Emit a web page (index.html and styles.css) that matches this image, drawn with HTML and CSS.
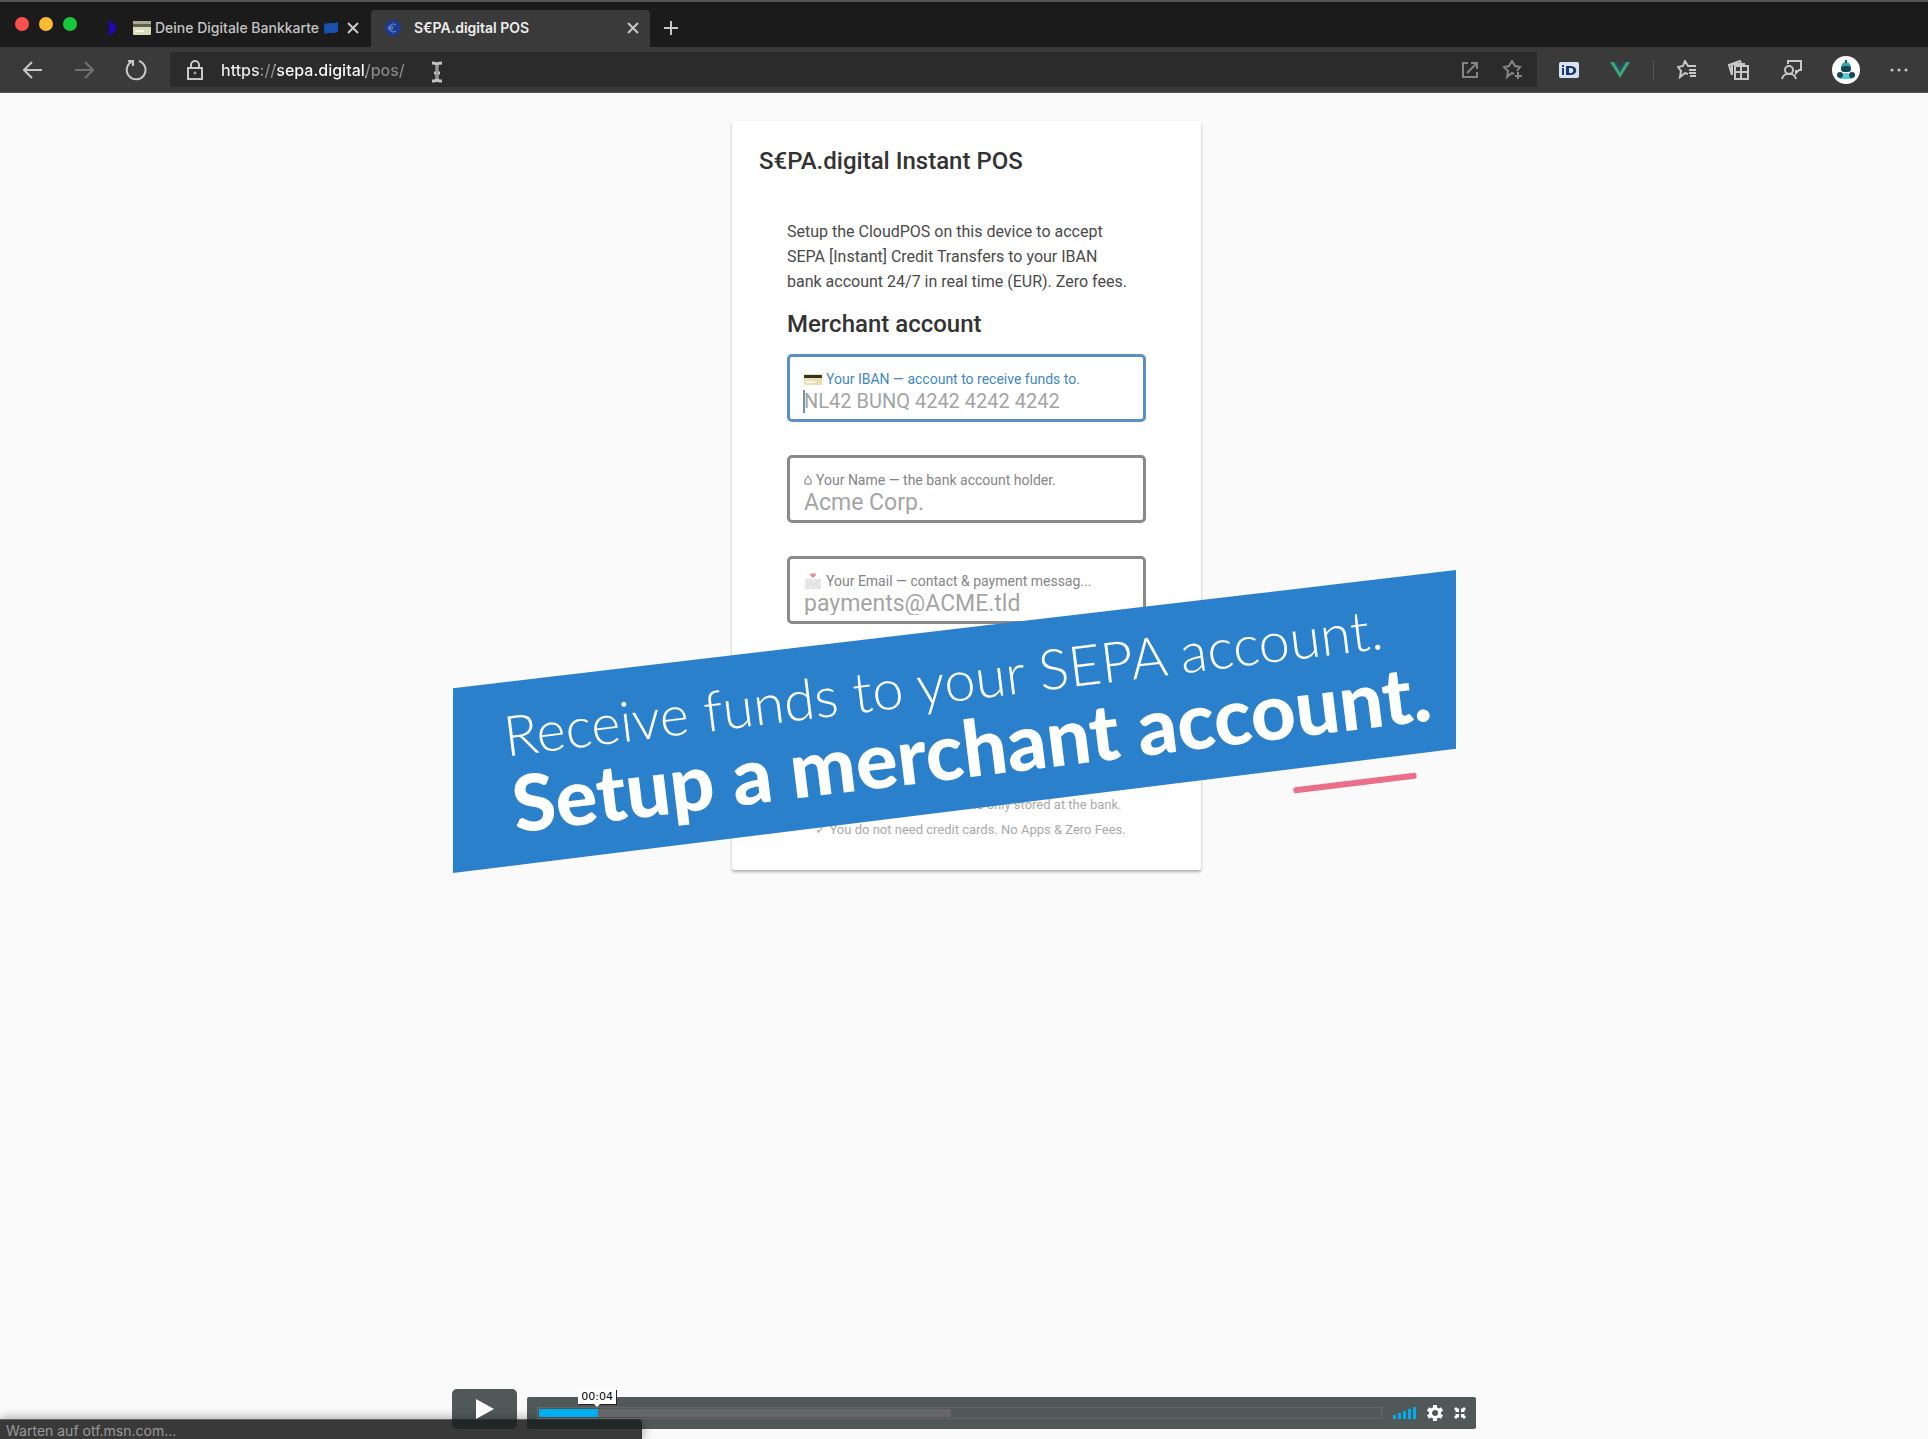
FILE: index.html
```html
<!DOCTYPE html>
<html lang="en">
<head>
    <meta charset="UTF-8">
    <meta name="viewport" content="width=device-width, initial-scale=1.0">
    <title>S€PA.digital POS</title>
    <link rel="stylesheet" href="styles.css">
</head>
<body>

    <header class="browser">
        <div class="tabs">
            <div class="lights">
                <span class="light red"></span>
                <span class="light yellow"></span>
                <span class="light green"></span>
            </div>
            <div class="tab">
                <svg class="moon" width="14" height="16" viewBox="0 0 14 16"><path d="M3 1c5 0 9 3 9 7s-4 7-9 7c3-3 3-11 0-14z" fill="#2306b5"/></svg>
                <svg width="18" height="14" viewBox="0 0 18 14"><rect width="18" height="14" rx="1" fill="#d9dcb8"/><rect width="18" height="3" fill="#a9ab8c"/><rect y="3" width="18" height="3" fill="#5f6150"/><rect x="2" y="9" width="9" height="2" fill="#f7f8e6"/></svg>
                <span class="tab-title">Deine Digitale Bankkarte</span>
                <svg width="16" height="14" viewBox="0 0 16 14"><path d="M1 3c5-2 9 0 14-2v10c-5 2-9 0-14 2z" fill="#174fae"/><circle cx="8" cy="7" r="3" fill="none" stroke="#3c78b8" stroke-width="1" stroke-dasharray="1 2"/></svg>
                <button class="close" type="button" aria-label="Close tab"><svg width="12" height="12" viewBox="0 0 12 12"><path d="M1 1l10 10M11 1L1 11"/></svg></button>
            </div>
            <div class="tab active">
                <svg class="favicon" width="18" height="18" viewBox="0 0 18 18"><circle cx="9" cy="9" r="8" fill="#1b3c92"/><path d="M12 6a4 4 0 1 0 0 6M4 8h6M4 10h5" fill="none" stroke="#6f98cc" stroke-width="1"/></svg>
                <span class="tab-title">S€PA.digital POS</span>
                <button class="close" type="button" aria-label="Close tab"><svg width="12" height="12" viewBox="0 0 12 12"><path d="M1 1l10 10M11 1L1 11"/></svg></button>
            </div>
            <button class="new-tab" type="button" aria-label="New tab"><svg width="16" height="16" viewBox="0 0 16 16"><path d="M8 1v14M1 8h14"/></svg></button>
        </div>

        <div class="toolbar">
            <nav class="nav">
                <button type="button" aria-label="Back"><svg width="20" height="20" viewBox="0 0 20 20"><path d="M19 10H1M9 2l-8 8 8 8"/></svg></button>
                <button type="button" class="dim" aria-label="Forward"><svg width="20" height="20" viewBox="0 0 20 20"><path d="M1 10h18M11 2l8 8-8 8"/></svg></button>
                <button type="button" aria-label="Reload"><svg width="22" height="22" viewBox="0 0 22 22"><path d="M14 2a9.400 9.400 0 1 1-7 0.500M3 2h5v5"/></svg></button>
            </nav>
            <form class="address">
                <svg width="16" height="20" viewBox="0 0 16 20"><path d="M1 8h14v11H1zM4 8V5a4 4 0 0 1 8 0v3"/><circle cx="8" cy="13" r="1" stroke-width="1"/></svg>
                <input class="url" type="text" value="https://sepa.digital/pos/" aria-label="Address">
                <button type="button" aria-label="Open in app"><svg width="18" height="18" viewBox="0 0 18 18"><path d="M7 2H2v14h14v-5M6 12L15 3M10 2h6v6"/></svg></button>
                <button type="button" aria-label="Add to favorites"><svg width="20" height="20" viewBox="0 0 20 20"><path d="M11 14l-2-1-5 4 1-6-4-4 5-1 3-5 3 5 5 1-3 4M15 12v7M12 16h7"/></svg></button>
            </form>
            <div class="tools">
                <button type="button" aria-label="iD"><svg class="solid" width="20" height="16" viewBox="0 0 20 16"><rect width="20" height="16" rx="2" fill="#d8e2f0"/><path d="M3 6h2v7H3zM3 3h2v2H3z" fill="#19376f"/><path d="M7 4h5c7 0 7 9 0 9H7zM10 6v5h2c3 0 3-5 0-5z" fill="#19376f" fill-rule="evenodd"/></svg></button>
                <button type="button" aria-label="Vue devtools"><svg class="solid" width="20" height="18" viewBox="0 0 20 18"><path d="M0 1h4l6 10 6-10h4L10 17z" fill="#3aa57c"/><path d="M4 1h3l3 5 3-5h3l-6 10z" fill="#31495b"/></svg></button>
                <span class="divider"></span>
                <button type="button" aria-label="Favorites"><svg width="20" height="20" viewBox="0 0 20 20"><path d="M11 14l-3-1-5 4 1-6-3-4 5-1 2-5 3 5h8M12 10h7M12 13h7M13 16h6"/></svg></button>
                <button type="button" aria-label="Collections"><svg width="22" height="20" viewBox="0 0 22 20"><path d="M7 6h13v13H7zM13 7v11M8 12h11M4 15L1 5l11-4 2 5M4 15V4h12v2"/></svg></button>
                <button type="button" aria-label="Feedback"><svg width="22" height="20" viewBox="0 0 22 20"><circle cx="8" cy="10" r="4"/><path d="M1 19c1-7 13-7 14 0M7 4V1h13v9h-2l-3 3v-3"/></svg></button>
                <button type="button" class="avatar" aria-label="Profile"><svg class="solid" width="28" height="28" viewBox="0 0 28 28"><circle cx="14" cy="14" r="14" fill="#fff"/><path d="M9 12c0-8 10-8 10 0z" fill="#37a5b3"/><path d="M13 4h2v3h-2z" fill="#175a67"/><rect x="9" y="10" width="10" height="6" rx="3" fill="#164653"/><path d="M8 23c0-8 12-8 12 0z" fill="#58c7d6"/><circle cx="8" cy="19" r="3" fill="#1b4652"/><circle cx="20" cy="19" r="3" fill="#1b4652"/></svg></button>
                <button type="button" aria-label="Menu"><svg class="dots" width="20" height="4" viewBox="0 0 20 4"><circle cx="3" cy="2" r="1.500"/><circle cx="10" cy="2" r="1.500"/><circle cx="17" cy="2" r="1.500"/></svg></button>
            </div>
        </div>
        <svg class="pointer" width="14" height="24" viewBox="0 0 14 24"><path d="M2 3c3 0 5 0 5 3 0-3 2-3 5-3M2 21c3 0 5 0 5-3 0 3 2 3 5 3M7 6v12M4 13h6" fill="none" stroke="#c4c4c4" stroke-width="3"/><path d="M7 5v14" stroke="#666" stroke-width="1"/></svg>
    </header>

    <main class="page">
        <form class="card">
            <h1>S€PA.digital Instant POS</h1>
            <div class="content">
                <p class="intro">Setup the CloudPOS on this device to accept SEPA [Instant] Credit Transfers to your IBAN bank account 24/7 in real time (EUR). Zero fees.</p>
                <h2>Merchant account</h2>
                <div class="fields">
                    <div class="field focused">
                        <label for="iban"><svg width="18" height="11" viewBox="0 0 18 11"><rect width="18" height="11" rx="1" fill="#e8dfb4"/><rect y="1" width="18" height="3" fill="#37331f"/><rect x="2" y="7" width="9" height="2" fill="#faf6dd"/></svg> Your IBAN — account to receive funds to.</label>
                        <input type="text" id="iban" placeholder="NL42 BUNQ 4242 4242 4242">
                        <span class="caret"></span>
                    </div>
                    <div class="field">
                        <label for="name"><svg width="8" height="10" viewBox="0 0 8 10"><path d="M1 9V5l3-4 3 4v4z" fill="none" stroke="#777"/></svg> Your Name — the bank account holder.</label>
                        <input type="text" id="name" placeholder="Acme Corp.">
                    </div>
                    <div class="field">
                        <label for="email"><svg width="18" height="16" viewBox="0 0 18 16"><path d="M1 6h16v10H1z" fill="#e8e8ea"/><path d="M1 6l8 6 8-6M1 16l6-6M17 16l-6-6" fill="none" stroke="#dadadc"/><path d="M9 5L6 2c0-2 2-2 3-1 1-1 3-1 3 1z" fill="#e88a9a"/></svg> Your Email — contact &amp; payment messag...</label>
                        <input type="email" id="email" placeholder="payments@ACME.tld">
                    </div>
                </div>
            </div>
            <p class="notes">✓ Your bank account data is only stored at the bank.<br>✓ You do not need credit cards. No Apps &amp; Zero Fees.</p>
        </form>
    </main>

    <section class="banner">
        <div class="banner-text">
            <p class="lead">Receive funds to your SEPA account.</p>
            <p class="strong">Setup a merchant account.</p>
        </div>
    </section>
    <span class="accent"></span>

    <div class="status">Warten auf otf.msn.com...</div>

    <div class="player">
        <button class="play" type="button" aria-label="Play"><svg width="20" height="20" viewBox="0 0 20 20"><path d="M1 0l18 10L1 20z" fill="#fff"/></svg></button>
        <div class="controls">
            <div class="seek">
                <input type="range" min="0" max="58" value="4" aria-label="Seek">
                <output class="time">00:04</output>
            </div>
            <button type="button" aria-label="Volume"><svg width="23" height="12" viewBox="0 0 23 12"><path d="M0 8h3v4H0zM5 6h3v6H5zM10 4h3v8h-3zM15 2h3v10h-3zM20 0h3v12h-3z" fill="#00adef"/></svg></button>
            <button type="button" aria-label="Settings"><svg width="16" height="16" viewBox="0 0 16 16"><circle cx="8" cy="8" r="4.500" fill="none" stroke="#fff" stroke-width="3"/><path d="M8 0v3M8 13v3M1 4l3 2M12 10l3 2M1 12l3-2M12 6l3-2" stroke="#fff" stroke-width="4"/></svg></button>
            <button type="button" aria-label="Exit fullscreen"><svg width="12" height="12" viewBox="0 0 12 12"><path d="M5 5H1l1-1-2-2 2-2 2 2 1-1zM7 5V1l1 1 2-2 2 2-2 2 1 1zM5 7v4l-1-1-2 2-2-2 2-2-1-1zM7 7h4l-1 1 2 2-2 2-2-2-1 1z" fill="#fff"/></svg></button>
        </div>
    </div>

</body>
</html>
```

FILE: styles.css
```css
* {
    box-sizing: border-box;
}
body {
    position: relative;
    display: flex;
    flex-direction: column;
    min-height: 100vh;
    margin: 0;
    overflow: hidden;
    background-color: #fafafa;
    font-family: Roboto, sans-serif;
    color: #333;
}
h1, h2, p {
    margin: 0;
}
button {
    display: flex;
    align-items: center;
    justify-content: center;
    padding: 0;
    border: none;
    background: none;
    cursor: pointer;
}

/* Browser window */
.browser {
    position: relative;
    background-color: #3a3a3a;
    border-bottom: 1px solid #555;
    font-family: Inter, sans-serif;
    font-size: 14px;
    font-weight: 500;
}
.browser svg {
    flex: none;
    fill: none;
    stroke: #c8c8c8;
    stroke-width: 2;
}
.browser .solid,
.tab > svg {
    stroke: none;
}
.tabs {
    display: flex;
    height: 47px;
    padding-top: 8px;
    background-color: #1b1b1b;
    border-top: 2px solid #555;
}
.lights {
    display: flex;
    gap: 10px;
    width: 104px;
    padding: 7px 0 0 15px;
}
.light {
    width: 14px;
    height: 14px;
    border-radius: 50%;
}
.red {
    background-color: #fb4f4d;
}
.yellow {
    background-color: #fdb932;
}
.green {
    background-color: #17c83c;
}
.tab {
    display: flex;
    align-items: center;
    gap: 4px;
    width: 267px;
    padding-bottom: 2px;
    color: #c4c4c4;
}
.tab .moon {
    margin-right: 11px;
}
.tab .close {
    margin-left: 4px;
}
.tab.active {
    width: 279px;
    padding: 0 11px 2px 13px;
    border-radius: 4px 4px 0 0;
    background-color: #3a3a3a;
    color: #eee;
    font-weight: 600;
}
.tab.active .favicon {
    margin-right: 8px;
}
.tab.active .close {
    margin-left: auto;
}
.new-tab {
    margin-left: 13px;
    padding-bottom: 2px;
}
.toolbar {
    display: flex;
    align-items: center;
    height: 45px;
}
.nav {
    display: flex;
    gap: 31px;
    width: 170px;
    padding-left: 23px;
}
.nav .dim {
    opacity: 0.400;
}
.address {
    display: flex;
    flex: 1;
    align-items: center;
    gap: 24px;
    height: 35px;
    padding: 0 14px 0 17px;
    background-color: #2b2b2b;
}
.address button svg {
    stroke: #858585;
}
.url {
    flex: 1;
    min-width: 0;
    height: 24px;
    margin-left: -8px;
    border: none;
    outline: none;
    background: linear-gradient(90deg, #eee 42px, #888 42px, #888 56px, #fff 56px, #fff 147px, #888 147px);
    background-clip: text;
    -webkit-background-clip: text;
    color: transparent;
    font: 500 16px Inter, sans-serif;
}
.tools {
    display: flex;
    align-items: center;
    gap: 31px;
    padding: 0 19px 0 22px;
}
.divider {
    width: 1px;
    height: 20px;
    margin: 0 -8px;
    background-color: #555;
}
.avatar {
    margin: 0 -2px;
}
.browser .dots {
    fill: #c8c8c8;
    stroke: none;
}
.pointer {
    position: absolute;
    left: 430px;
    top: 60px;
}

/* Merchant form */
.page {
    flex: 1;
    padding: 28px 0 0 5px;
}
.card {
    width: 469px;
    margin: 0 auto;
    padding: 28px 27px;
    border-radius: 2px;
    background-color: #fff;
    box-shadow: 0 2px 3px rgba(0, 0, 0, 0.3);
}
h1, h2 {
    font-size: 24px;
    font-weight: 500;
    line-height: 24px;
}
.content {
    padding: 46px 28px 0;
}
.intro {
    padding-right: 16px;
    font-size: 16px;
    line-height: 25px;
    color: #4a4a4a;
}
h2 {
    margin: 18px 0;
}
.fields {
    display: flex;
    flex-direction: column;
    gap: 33px;
}
.field {
    position: relative;
    padding: 12px 14px 6px;
    border: 3px solid #8a8a8a;
    border-radius: 5px;
}
.field label {
    display: flex;
    align-items: center;
    gap: 4px;
    height: 20px;
    font-size: 14px;
    white-space: nowrap;
    color: #858585;
}
.field input {
    display: block;
    width: 100%;
    height: 24px;
    padding: 0;
    border: none;
    outline: none;
    background: none;
    font: 23px Roboto, sans-serif;
}
.field input::placeholder {
    color: #a4a4a4;
    opacity: 1;
}
.focused {
    border-color: #5a90c8;
}
.focused input {
    font-size: 20px;
}
.focused label {
    color: #4287c5;
}
.caret {
    position: absolute;
    left: 13px;
    top: 33px;
    width: 2px;
    height: 23px;
    background-color: #6f93bb;
}
.notes {
    margin-top: 168px;
    padding-left: 8px;
    font-size: 13px;
    line-height: 25px;
    text-align: center;
    color: #aaa;
}

/* Slanted caption over the page */
.banner {
    position: absolute;
    left: 453px;
    top: 570px;
    display: flex;
    align-items: center;
    width: 1003px;
    height: 303px;
    padding: 0 0 14px 52px;
    background-color: #2a80cb;
    clip-path: polygon(0 39%, 100% 0, 100% 59%, 0 100%);
    color: #fff;
    font-family: Lato, sans-serif;
    white-space: nowrap;
}
.banner-text {
    transform: rotate(-7deg);
}
.lead {
    font-size: 56px;
    font-weight: 300;
    line-height: 64px;
}
.strong {
    font-size: 78px;
    font-weight: 900;
    line-height: 72px;
}
.accent {
    position: absolute;
    left: 1293px;
    top: 780px;
    width: 124px;
    height: 6px;
    border-radius: 2px;
    background-color: #ea708a;
    transform: rotate(-7deg);
}

/* Video player */
.status {
    position: absolute;
    left: 0;
    bottom: 0;
    width: 33.300%;
    height: 20px;
    padding-left: 6px;
    border-top: 1px solid #666;
    border-radius: 0 4px 0 0;
    background-color: #393939;
    box-shadow: 0 0 12px rgba(0, 0, 0, 0.4);
    font: 14px/22px Inter, sans-serif;
    color: #999;
}
.player {
    position: absolute;
    left: 0;
    right: 0;
    bottom: 10px;
    display: flex;
    align-items: flex-end;
    gap: 10px;
    width: 1024px;
    margin: 0 auto;
}
.play {
    width: 65px;
    height: 40px;
    border-radius: 5px;
    background-color: rgba(23, 35, 34, 0.75);
}
.controls {
    display: flex;
    flex: 1;
    align-items: center;
    gap: 11px;
    height: 32px;
    padding: 0 10px;
    border-radius: 2px;
    background-color: rgba(23, 35, 34, 0.75);
}
.seek {
    position: relative;
    display: flex;
    flex: 1;
}
.seek input {
    width: 100%;
    height: 12px;
    margin: 0;
    border: 1px solid #666;
    appearance: none;
    background: linear-gradient(90deg, #00adef 7%, #666 7%, #666 49%, transparent 49%) content-box;
    padding: 1px;
}
.seek input::-webkit-slider-thumb {
    appearance: none;
    width: 1px;
    height: 8px;
}
.time {
    position: absolute;
    left: 7%;
    bottom: 15px;
    width: 38px;
    height: 15px;
    margin-left: -18px;
    background-color: #fff;
    box-shadow: 1px 1px 0 #222;
    font: 11px/15px "DejaVu Sans", sans-serif;
    text-align: center;
    color: #000;
}
.time::after {
    content: "";
    position: absolute;
    left: 16px;
    top: 15px;
    border: 3px solid transparent;
    border-top-color: #fff;
}
```
